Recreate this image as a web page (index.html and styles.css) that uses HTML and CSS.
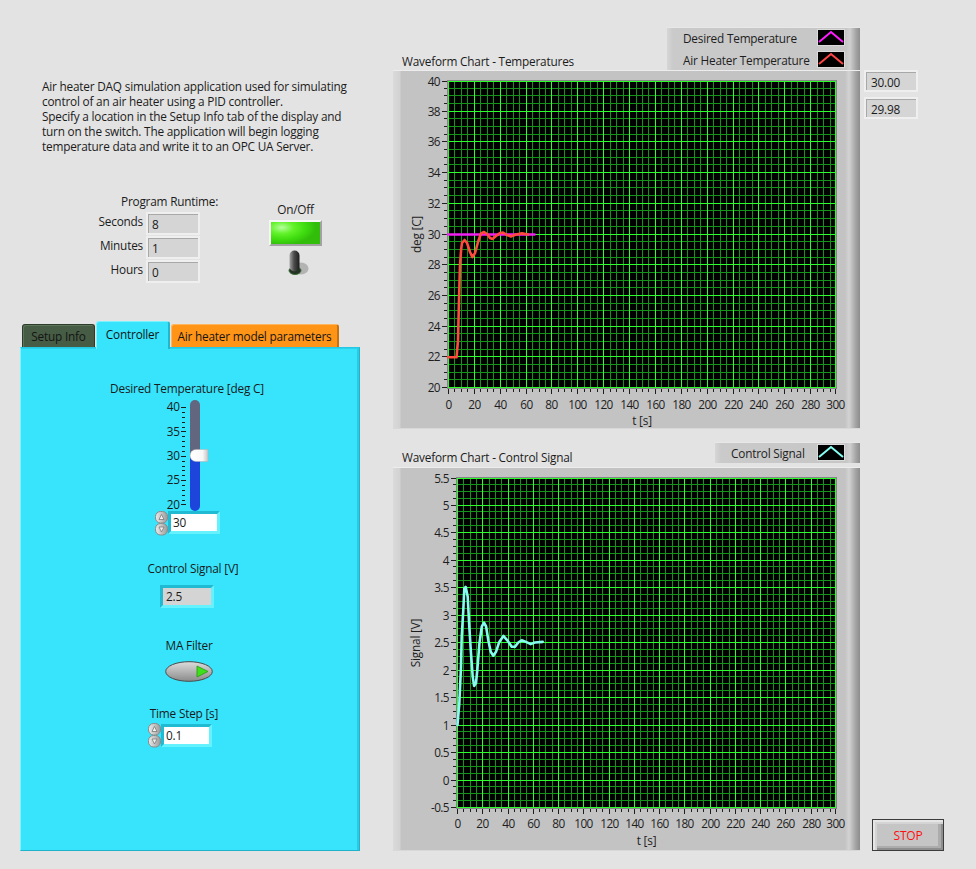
FILE: index.html
```html
<!DOCTYPE html>
<html lang="en">
<head>
<meta charset="utf-8">
<title>Air heater DAQ simulation</title>
<link rel="stylesheet" href="styles.css">
</head>
<body>
<div class="panel">
  <section class="left">
    <p class="desc">Air heater DAQ simulation application used for simulating<br>control of an air heater using a PID controller.<br>Specify a location in the Setup Info tab of the display and<br>turn on the switch. The application will begin logging<br>temperature data and write it to an OPC UA Server.</p>

    <div class="ctrl-row">
      <div class="runtime">
        <div class="runtime-title">Program Runtime:</div>
        <div class="rt-label">Seconds</div><div class="ind rt-box">8</div>
        <div class="rt-label">Minutes</div><div class="ind rt-box">1</div>
        <div class="rt-label">Hours</div><div class="ind rt-box">0</div>
      </div>
      <div class="onoff">
        <div class="onoff-label">On/Off</div>
        <div class="led-btn"></div>
        <svg class="toggle" width="21" height="26" viewBox="0 0 21 26">
          <defs>
            <linearGradient id="leverGrad" x1="0" x2="1" y1="0" y2="0">
              <stop offset="0" stop-color="#a4a4a4"/>
              <stop offset="0.45" stop-color="#4c4c4c"/>
              <stop offset="1" stop-color="#1c1c1c"/>
            </linearGradient>
          </defs>
          <ellipse class="tg-shadow" cx="13" cy="18.5" rx="7.5" ry="6"/>
          <ellipse class="tg-base" cx="7" cy="20.5" rx="6" ry="4"/>
          <rect x="1.5" y="0.5" width="10" height="21" rx="5" fill="url(#leverGrad)"/>
        </svg>
      </div>
    </div>

    <div class="tabctl">
      <div class="tabs">
        <div class="tab tab-setup">Setup Info</div>
        <div class="tab tab-ctrl">Controller</div>
        <div class="tab tab-model">Air heater model parameters</div>
      </div>
      <div class="tabpage">
        <div class="lbl lbl-desired">Desired Temperature [deg C]</div>
        <svg class="slider" width="52" height="116" viewBox="0 0 52 116">
          <defs>
            <clipPath id="trackClip"><rect x="30" y="4" width="10" height="111" rx="5"/></clipPath>
            <linearGradient id="thumbGrad" x1="0" x2="1" y1="0" y2="0">
              <stop offset="0" stop-color="#ffffff"/>
              <stop offset="0.7" stop-color="#f8f8f8"/>
              <stop offset="1" stop-color="#c4c4c4"/>
            </linearGradient>
          </defs>
          <g class="slider-scale">
            <text x="19.5" y="11" dy="0.35em">40</text>
            <text x="19.5" y="35.4" dy="0.35em">35</text>
            <text x="19.5" y="59.75" dy="0.35em">30</text>
            <text x="19.5" y="84.1" dy="0.35em">25</text>
            <text x="19.5" y="108.5" dy="0.35em">20</text>
          </g>
          <path class="slider-ticks" d="M21 11.5H26M22 16.5H25M22 21.5H25M22 26.5H25M22 31.5H25M21 35.5H26M22 40.5H25M22 45.5H25M22 50.5H25M22 55.5H25M21 60.5H26M22 65.5H25M22 70.5H25M22 74.5H25M22 79.5H25M21 84.5H26M22 89.5H25M22 94.5H25M22 99.5H25M22 104.5H25M21 108.5H26"/>
          <g clip-path="url(#trackClip)">
            <rect class="track-top" x="30" y="4" width="10" height="56"/>
            <rect class="track-fill" x="30" y="59.75" width="10" height="57"/>
          </g>
          <path d="M36 53.5 H48 V65.5 H36 A6 6 0 0 1 36 53.5 Z" fill="url(#thumbGrad)" class="thumb"/>
        </svg>
        <div class="numctl numctl-temp">
          <svg class="spin" width="13" height="25" viewBox="0 0 13 25">
            <defs>
              <linearGradient id="spinGradA" x1="0" x2="1" y1="0" y2="0">
                <stop offset="0" stop-color="#ececec"/>
                <stop offset="1" stop-color="#9a9a9a"/>
              </linearGradient>
            </defs>
            <rect x="0.5" y="0.5" width="12" height="11.5" rx="5" fill="url(#spinGradA)" class="spin-btn"/>
            <rect x="0.5" y="12.5" width="12" height="11.5" rx="5" fill="url(#spinGradA)" class="spin-btn"/>
            <path class="spin-arrow" d="M4 8.5 L6.5 3.5 L9 8.5 Z"/>
            <path class="spin-arrow" d="M4 16 L6.5 21 L9 16 Z"/>
          </svg>
          <div class="num-box num-white temp-box">30</div>
        </div>

        <div class="lbl lbl-signal">Control Signal [V]</div>
        <div class="num-box num-gray sig-box">2.5</div>

        <div class="lbl lbl-ma">MA Filter</div>
        <svg class="ma-btn" width="48" height="21" viewBox="0 0 48 21">
          <defs>
            <linearGradient id="maGrad" x1="0" x2="0" y1="0" y2="1">
              <stop offset="0" stop-color="#dcdcdc"/>
              <stop offset="0.5" stop-color="#b4b4b4"/>
              <stop offset="1" stop-color="#8a8a8a"/>
            </linearGradient>
          </defs>
          <ellipse cx="24" cy="10.5" rx="23.3" ry="9.8" fill="url(#maGrad)" class="ma-oval"/>
          <polygon class="ma-tri" points="32,5 43,10.5 32,16"/>
        </svg>

        <div class="lbl lbl-step">Time Step [s]</div>
        <div class="numctl numctl-step">
          <svg class="spin" width="13" height="25" viewBox="0 0 13 25">
            <defs>
              <linearGradient id="spinGradB" x1="0" x2="1" y1="0" y2="0">
                <stop offset="0" stop-color="#ececec"/>
                <stop offset="1" stop-color="#9a9a9a"/>
              </linearGradient>
            </defs>
            <rect x="0.5" y="0.5" width="12" height="11.5" rx="5" fill="url(#spinGradB)" class="spin-btn"/>
            <rect x="0.5" y="12.5" width="12" height="11.5" rx="5" fill="url(#spinGradB)" class="spin-btn"/>
            <path class="spin-arrow" d="M4 8.5 L6.5 3.5 L9 8.5 Z"/>
            <path class="spin-arrow" d="M4 16 L6.5 21 L9 16 Z"/>
          </svg>
          <div class="num-box num-white step-box">0.1</div>
        </div>
      </div>
    </div>
  </section>

  <section class="charts">
    <div class="chart-head head-temp">
      <div class="chart-title">Waveform Chart - Temperatures</div>
      <div class="legend legend-temp">
        <div class="legend-row"><span>Desired Temperature</span>
          <svg class="swatch" width="28" height="17" viewBox="0 0 28 17"><rect class="sw-bg" x="0.5" y="0.5" width="27" height="16"/><polyline class="sw-line sw-magenta" points="2,13 14,3 26,13"/></svg>
        </div>
        <div class="legend-row"><span>Air Heater Temperature</span>
          <svg class="swatch" width="28" height="17" viewBox="0 0 28 17"><rect class="sw-bg" x="0.5" y="0.5" width="27" height="16"/><polyline class="sw-line sw-red" points="2,13 14,3 26,13"/></svg>
        </div>
      </div>
    </div>
    <div class="chart-frame frame-temp"><svg id="chart-temp" class="chart-svg" width="467" height="359" viewBox="0 0 467 359"></svg></div>

    <div class="chart-head head-sig">
      <div class="chart-title">Waveform Chart - Control Signal</div>
      <div class="legend legend-sig">
        <div class="legend-row"><span>Control Signal</span>
          <svg class="swatch" width="28" height="17" viewBox="0 0 28 17"><rect class="sw-bg" x="0.5" y="0.5" width="27" height="16"/><polyline class="sw-line sw-cyan" points="2,13 14,3 26,13"/></svg>
        </div>
      </div>
    </div>
    <div class="chart-frame frame-sig"><svg id="chart-sig" class="chart-svg" width="467" height="384" viewBox="0 0 467 384"></svg></div>
  </section>

  <aside class="side">
    <div class="ind side-ind">30.00</div>
    <div class="ind side-ind">29.98</div>
    <button class="stop" type="button">STOP</button>
  </aside>
</div>
<script src="app.js"></script>
</body>
</html>
```

FILE: styles.css
```css
* { box-sizing: border-box; margin: 0; padding: 0; }
html, body { width: 976px; height: 869px; overflow: hidden; }
body {
  background: #e3e3e3;
  font-family: "Open Sans", "Noto Sans", "DejaVu Sans", sans-serif;
  font-size: 11.8px;
  letter-spacing: -0.2px;
  line-height: 16px;
  color: #1b1b1b;
}
.panel { display: grid; grid-template-columns: 393px 467px 116px; height: 869px; }

/* ---------- left column ---------- */
.left { display: flex; flex-direction: column; align-items: flex-start; }
.desc { margin: 79px 0 0 42px; line-height: 15px; white-space: nowrap; }

.ctrl-row { display: flex; align-items: flex-start; margin-top: 39px; }
.runtime {
  display: grid;
  grid-template-columns: 60px 54px;
  column-gap: 3px;
  row-gap: 1px;
  margin-left: 83px;
}
.runtime-title { grid-column: 1 / -1; margin-left: 38px; margin-bottom: 2px; white-space: nowrap; }
.rt-label { text-align: right; padding-top: 1px; white-space: nowrap; }
.ind {
  background: #d5d5d5;
  border: 2px solid #efefef;
  box-shadow: inset 1px 1px 0 #a8a8a8;
  padding: 1px 0 0 4px;
  line-height: 19px;
}
.rt-box { height: 23px; }

.onoff { display: flex; flex-direction: column; align-items: flex-start; margin: 8px 0 0 69px; }
.onoff-label { width: 53px; text-align: center; }
.led-btn {
  margin-top: 3px;
  width: 53px;
  height: 26px;
  border: 2px solid;
  border-color: #f6f6f6 #a2a2a2 #a2a2a2 #f6f6f6;
  background: radial-gradient(ellipse 70% 80% at 22% 25%, #b6ff9e 0, #62f22a 35%, #3fdc0f 70%, #31bd0a 100%);
}
.toggle { margin: 4px 0 0 19px; display: block; }
.tg-shadow { fill: #8c8c8c; opacity: 0.55; }
.tg-base { fill: #233223; stroke: #3f6a3a; stroke-width: 1; }

/* ---------- tab control ---------- */
.tabctl { margin: 38px 0 0 20px; width: 340px; }
.tabs { display: flex; align-items: flex-end; height: 26px; padding-left: 2px; position: relative; z-index: 1; }
.tab { white-space: nowrap; text-align: center; border-radius: 3px 3px 0 0; }
.tab-setup {
  width: 73px; height: 23px; line-height: 22px; margin-right: 1px;
  background: #465c44;
  border: 1px solid #2c3c2b; border-bottom: none;
  box-shadow: inset 1px 1px 0 #5d765a;
  color: #141414;
}
.tab-ctrl {
  width: 74px; height: 28px; margin-bottom: -2px; padding-top: 4px;
  background: #37e4fc;
  border-top: 1px solid #7df2ff; border-left: 1px solid #7df2ff; border-right: 2px solid #22b7cf;
  color: #141414;
}
.tab-model {
  width: 168px; height: 23px; line-height: 22px; margin-left: 1px;
  background: #ff9417;
  border-top: 1px solid #ffb55e; border-left: 1px solid #ffb55e; border-right: 2px solid #c8720e;
  color: #141414;
}
.tabpage {
  height: 504px;
  background: #37e4fc;
  border: 1px solid;
  border-color: #25c8e2 #1fb2ca #1fb2ca #7df2ff;
  box-shadow: inset 0 1px 0 #2bd2ec, inset -2px 0 0 #2ccbe4;
  display: flex;
  flex-direction: column;
  align-items: flex-start;
}
.lbl { width: 200px; text-align: center; white-space: nowrap; }
.lbl-desired { margin: 32px 0 0 66px; }
.slider { display: block; margin-left: 139px; overflow: visible; }
.slider-scale text { font-size: 11.8px; letter-spacing: -0.4px; fill: #1b1b1b; text-anchor: end; }
.slider-ticks { stroke: #1b1b1b; stroke-width: 1; fill: none; }
.track-top { fill: #63667f; }
.track-fill { fill: #1d45dc; }
.thumb { stroke: #b0b0b0; stroke-width: 0.5; }

.numctl { display: flex; align-items: flex-start; }
.numctl-temp { margin: -1px 0 0 134px; }
.numctl-step { margin: 2px 0 0 127px; }
.spin { display: block; }
.spin-btn { stroke: #8a8a8a; stroke-width: 1; }
.spin-arrow { fill: #f2f2f2; stroke: #7a7a7a; stroke-width: 0.8; }
.num-box {
  height: 23px;
  border: 3px solid;
  border-color: #21bad3 #66f1ff #66f1ff #21bad3;
  line-height: 17px;
  padding-left: 2px;
}
.num-white { background: #ffffff; }
.num-gray { background: #d4d4d4; }
.temp-box { width: 52px; }
.step-box { width: 51px; margin-top: 1px; }

.lbl-signal { margin: 24px 0 0 72px; }
.sig-box { width: 54px; margin: 9px 0 0 139px; padding-left: 3px; }
.lbl-ma { margin: 29px 0 0 68px; }
.ma-btn { display: block; margin: 8px 0 0 144px; }
.ma-oval { stroke: #4a4a4a; stroke-width: 1; }
.ma-tri { fill: #3ee019; stroke: #269a0e; stroke-width: 0.8; }
.lbl-step { margin: 23px 0 0 63px; }

/* ---------- charts ---------- */
.charts { display: flex; flex-direction: column; }
.chart-head { display: flex; justify-content: space-between; align-items: flex-end; }
.head-temp { height: 70px; }
.head-sig { height: 38px; }
.chart-title { padding-left: 9px; white-space: nowrap; }
.head-temp .chart-title { margin-bottom: 1px; }
.head-sig .chart-title { margin-bottom: 2px; }

.legend {
  background: linear-gradient(to right, #d6d6d6 0, #cacaca 6px, #c6c6c6 calc(100% - 14px), #d0d0d0 calc(100% - 10px), #a4a4a4 calc(100% - 4px), #8e8e8e 100%);
  box-shadow: inset 0 1px 0 #e8e8e8;
  padding: 2px 15px 2px 16px;
  display: flex;
  flex-direction: column;
  gap: 5px;
}
.legend-temp { width: 193px; height: 43px; }
.legend-sig { width: 145px; height: 21px; margin-bottom: 4px; }
.legend-row { height: 17px; display: flex; justify-content: space-between; align-items: center; white-space: nowrap; color: #1e1e1e; }
.swatch { display: block; }
.sw-bg { fill: #000; stroke: #dadada; stroke-width: 1; }
.sw-line { fill: none; stroke-width: 2; }
.sw-magenta { stroke: #ff1cff; }
.sw-red { stroke: #ff4646; }
.sw-cyan { stroke: #84fff2; }

.chart-frame {
  background: linear-gradient(to right, #dadada 0, #d2d2d2 7px, #c3c3c3 8px, #c3c3c3 calc(100% - 15px), #d3d3d3 calc(100% - 11px), #a8a8a8 calc(100% - 5px), #8c8c8c 100%);
  box-shadow: inset 0 1px 0 #ededed, inset 0 -1px 0 #d8d8d8;
}
.frame-temp { height: 359px; }
.frame-sig { height: 384px; }
.chart-svg { display: block; }
.plot-bg { fill: #000; }
.plot-border { fill: none; stroke: #858585; stroke-width: 1; }
.grid-minor line { stroke: #14951a; stroke-width: 1; }
.grid-major line { stroke: #2dff2d; stroke-width: 1; }
.axis-ticks line { stroke: #1e1e1e; stroke-width: 1; }
.tick-label text { font-size: 11.8px; letter-spacing: -0.6px; fill: #1e1e1e; }
.axis-title { font-size: 11.8px; fill: #1e1e1e; }
.trace { fill: none; stroke-width: 2.6; stroke-linejoin: round; stroke-linecap: round; }
.trace-magenta { stroke: #f41ef4; }
.trace-red { stroke: #ff4a3c; }
.trace-cyan { stroke: #86fbf0; }

/* ---------- right side ---------- */
.side { display: flex; flex-direction: column; align-items: flex-start; height: 851px; padding: 70px 0 0 4px; }
.side-ind { width: 54px; height: 22px; line-height: 18px; padding-left: 5px; }
.side-ind + .side-ind { margin-top: 5px; }
.stop {
  margin: auto 0 0 8px;
  width: 72px;
  height: 32px;
  border: 1px solid #3c3c3c;
  background: #c5c5c5;
  box-shadow: inset 2px 2px 0 #e6e6e6, inset 4px 4px 0 #d4d4d4, inset -2px -2px 0 #8e8e8e, inset -5px -4px 0 #acacac;
  color: #ff1010;
  font-family: "Open Sans", "Noto Sans", sans-serif;
  font-size: 12px;
  letter-spacing: -0.2px;
  cursor: pointer;
}
```

FILE: app.js
```js
(function () {
  var NS = 'http://www.w3.org/2000/svg';
  function el(tag, attrs, parent, text) {
    var e = document.createElementNS(NS, tag);
    for (var k in attrs) { e.setAttribute(k, attrs[k]); }
    if (text !== undefined) { e.textContent = text; }
    if (parent) { parent.appendChild(e); }
    return e;
  }
  function isMult(v, step) { var r = v / step; return Math.abs(r - Math.round(r)) < 1e-6; }
  function fmt(v) { return String(Math.round(v * 1000) / 1000); }

  function drawChart(svg, c) {
    var X = function (t) { return c.px + (t - c.x0) / (c.x1 - c.x0) * c.pw; };
    var Y = function (v) { return c.py + c.ph - (v - c.y0) / (c.y1 - c.y0) * c.ph; };
    var right = c.px + c.pw, bottom = c.py + c.ph;
    el('rect', { x: c.px, y: c.py, width: c.pw, height: c.ph, 'class': 'plot-bg' }, svg);
    var gMin = el('g', { 'class': 'grid-minor' }, svg);
    var gMaj = el('g', { 'class': 'grid-major' }, svg);
    var gTick = el('g', { 'class': 'axis-ticks' }, svg);
    var gLab = el('g', { 'class': 'tick-label' }, svg);
    var i, n, t, v, p, maj;

    n = Math.round((c.x1 - c.x0) / c.xMinor);
    for (i = 0; i <= n; i++) {
      t = c.x0 + i * c.xMinor;
      p = Math.min(Math.round(X(t)) + 0.5, right - 0.5);
      maj = isMult(t - c.x0, c.xMajor);
      el('line', { x1: p, y1: c.py, x2: p, y2: bottom }, maj ? gMaj : gMin);
      el('line', { x1: p, y1: bottom + 1, x2: p, y2: bottom + (maj ? 6 : 4) }, gTick);
      if (maj) { el('text', { x: p, y: bottom + c.xLabelOff, dy: '0.35em', 'text-anchor': 'middle' }, gLab, fmt(t)); }
    }

    n = Math.round((c.y1 - c.y0) / c.yMinor);
    for (i = 0; i <= n; i++) {
      v = c.y0 + i * c.yMinor;
      p = Math.max(Math.round(Y(v)) - 0.5, c.py + 0.5);
      maj = isMult(v - c.y0, c.yMajor);
      el('line', { x1: c.px, y1: p, x2: right, y2: p }, maj ? gMaj : gMin);
      el('line', { x1: c.px - (maj ? 6 : 4), y1: p, x2: c.px - 1, y2: p }, gTick);
      if (maj) { el('text', { x: c.px - 8, y: p, dy: '0.35em', 'text-anchor': 'end' }, gLab, fmt(v)); }
    }

    el('rect', { x: c.px - 0.5, y: c.py - 0.5, width: c.pw + 1, height: c.ph + 1, 'class': 'plot-border' }, svg);

    c.series.forEach(function (s) {
      var d = s.pts.map(function (q, k) {
        return (k ? 'L' : 'M') + X(q[0]).toFixed(1) + ' ' + Y(q[1]).toFixed(1);
      }).join(' ');
      el('path', { d: d, 'class': 'trace ' + s.cls }, svg);
    });

    var cy = c.py + c.ph / 2;
    el('text', { x: c.yTitleX, y: cy, dy: '0.35em', 'text-anchor': 'middle',
      transform: 'rotate(-90 ' + c.yTitleX + ' ' + cy + ')', 'class': 'axis-title' }, svg, c.yTitle);
    el('text', { x: c.px + c.pw / 2, y: bottom + c.xTitleOff, dy: '0.35em', 'text-anchor': 'middle', 'class': 'axis-title' }, svg, c.xTitle);
  }

  var airTemp = [
    [0, 22], [6.6, 22], [7.7, 23.1], [8.5, 25.7], [9.3, 28.0], [10.1, 29.0], [10.8, 29.45],
    [12.8, 29.64], [14.7, 29.45], [17.0, 28.86], [18.9, 28.53], [20.9, 28.79], [23.2, 29.51],
    [25.5, 30.07], [27.8, 30.16], [30.2, 30.03], [32.5, 29.77], [34.4, 29.71], [37.1, 29.9],
    [40.2, 30.1], [42.5, 30.13], [45.6, 29.97], [48.7, 29.87], [52.6, 30.0], [57.2, 30.07], [61.9, 30.0]
  ];
  var desired = [[0, 30], [66.9, 30]];

  drawChart(document.getElementById('chart-temp'), {
    px: 55, py: 11, pw: 388, ph: 307,
    x0: 0, x1: 300, xMajor: 20, xMinor: 5,
    y0: 20, y1: 40, yMajor: 2, yMinor: 0.5,
    xLabelOff: 17, xTitleOff: 33, yTitleX: 24,
    yTitle: 'deg [C]', xTitle: 't [s]',
    series: [{ cls: 'trace-magenta', pts: desired }, { cls: 'trace-red', pts: airTemp }]
  });

  var signal = [
    [0.4, 1.01], [1.8, 1.40], [3.2, 2.07], [3.7, 2.61], [5.0, 3.10], [5.8, 3.49], [6.9, 3.52],
    [8.5, 3.34], [9.7, 2.80], [11.1, 2.31], [12.4, 1.89], [13.5, 1.72], [15.0, 1.77], [16.1, 2.01],
    [17.7, 2.49], [19.6, 2.80], [21.4, 2.87], [23.0, 2.80], [24.8, 2.55], [26.7, 2.34], [28.7, 2.27],
    [30.9, 2.34], [33.5, 2.52], [36.7, 2.63], [39.8, 2.55], [43.3, 2.43], [45.9, 2.43], [48.5, 2.51],
    [51.2, 2.55], [54.6, 2.52], [58.3, 2.48], [61.7, 2.51], [67.8, 2.52]
  ];

  drawChart(document.getElementById('chart-sig'), {
    px: 64, py: 11, pw: 379, ph: 330,
    x0: 0, x1: 300, xMajor: 20, xMinor: 5,
    y0: -0.5, y1: 5.5, yMajor: 0.5, yMinor: 0.125,
    xLabelOff: 16, xTitleOff: 33, yTitleX: 22.5,
    yTitle: 'Signal [V]', xTitle: 't [s]',
    series: [{ cls: 'trace-cyan', pts: signal }]
  });
})();
```
